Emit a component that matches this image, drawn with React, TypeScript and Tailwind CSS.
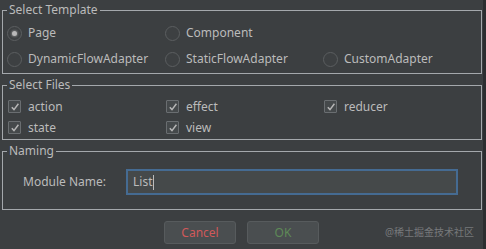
import { ReactNode } from "react";

function Group({ title, className = "", children }: { title: string; className?: string; children: ReactNode }) {
  return (
    <fieldset className={`ml-[2px] w-[480px] border border-[#a4a8ac] ${className}`}>
      <legend className="ml-[4px] px-[2px] text-[12px] leading-[18px] text-[#bbbbbb]">{title}</legend>
      {children}
    </fieldset>
  );
}

function Radio({ label, checked }: { label: string; checked?: boolean }) {
  return (
    <div className="flex h-[26px] items-center">
      <span className="flex h-[15px] w-[15px] items-center justify-center rounded-full border border-[#5b5e60] bg-[#3d4042]">
        {checked && <span className="h-[5px] w-[5px] rounded-full bg-[#b9b9b9] shadow-[0_0_2px_1px_rgba(160,160,160,0.5)]" />}
      </span>
      <span className="ml-[6px] text-[12px] text-[#bbbbbb]">{label}</span>
    </div>
  );
}

function Check({ label }: { label: string }) {
  return (
    <div className="flex h-[21px] items-center">
      <span className="flex h-[13px] w-[13px] items-center justify-center rounded-[1px] border border-[#6a6e71] bg-[#45494b]">
        <svg width="10" height="10" viewBox="0 0 10 10">
          <path d="M1.8 5.2 L4 7.6 L8.4 1.8" fill="none" stroke="#b6b6b6" strokeWidth="1.5" />
        </svg>
      </span>
      <span className="ml-[7px] text-[12px] text-[#bbbbbb]">{label}</span>
    </div>
  );
}

export default function App() {
  return (
    <div className="relative flex h-[249px] w-[486px] overflow-hidden bg-[#3c3f41] font-['Noto_Sans','Noto_Sans_CJK_SC',sans-serif]">
      <div className="w-[483px] pt-[1px]">
        <Group title="Select Template" className="pb-[1px]">
          <div className="grid grid-cols-[158px_158px_1fr] pl-[4px] pt-[1px]">
            <Radio label="Page" checked />
            <Radio label="Component" />
            <div />
            <Radio label="DynamicFlowAdapter" />
            <Radio label="StaticFlowAdapter" />
            <Radio label="CustomAdapter" />
          </div>
        </Group>

        <Group title="Select Files" className="mt-[2px] pb-[1px]">
          <div className="grid grid-cols-[158px_158px_1fr] pl-[5px] pt-[2px]">
            <Check label="action" />
            <Check label="effect" />
            <Check label="reducer" />
            <Check label="state" />
            <Check label="view" />
          </div>
        </Group>

        <Group title="Naming" className="mt-[2px] pb-[14px]">
          <div className="flex items-center pl-[20px] pt-[9px]">
            <span className="w-[103px] text-[12px] text-[#bbbbbb]">Module Name:</span>
            <div className="flex h-[26px] w-[332px] items-center border-2 border-[#456b92] bg-[#45494a] pl-[5px] text-[12px] text-[#bbbbbb]">
              List
              <span className="ml-[1px] h-[15px] w-px bg-[#bbbbbb]" />
            </div>
          </div>
        </Group>

        <div className="mt-[11px] flex justify-center gap-[11px]">
          <button className="h-[23px] w-[72px] rounded-[3px] border border-[#575b5d] bg-[#4a4e50] text-[12px] text-[#d0595a]">Cancel</button>
          <button className="h-[23px] w-[72px] rounded-[3px] border border-[#575b5d] bg-[#4a4e50] text-[12px] text-[#5e8a57]">OK</button>
        </div>
      </div>
      <div className="w-[3px] bg-[#2c2e30]" />
      <span className="absolute left-[385px] top-[225px] text-[10px] text-[#77797b]">@稀土掘金技术社区</span>
    </div>
  );
}
